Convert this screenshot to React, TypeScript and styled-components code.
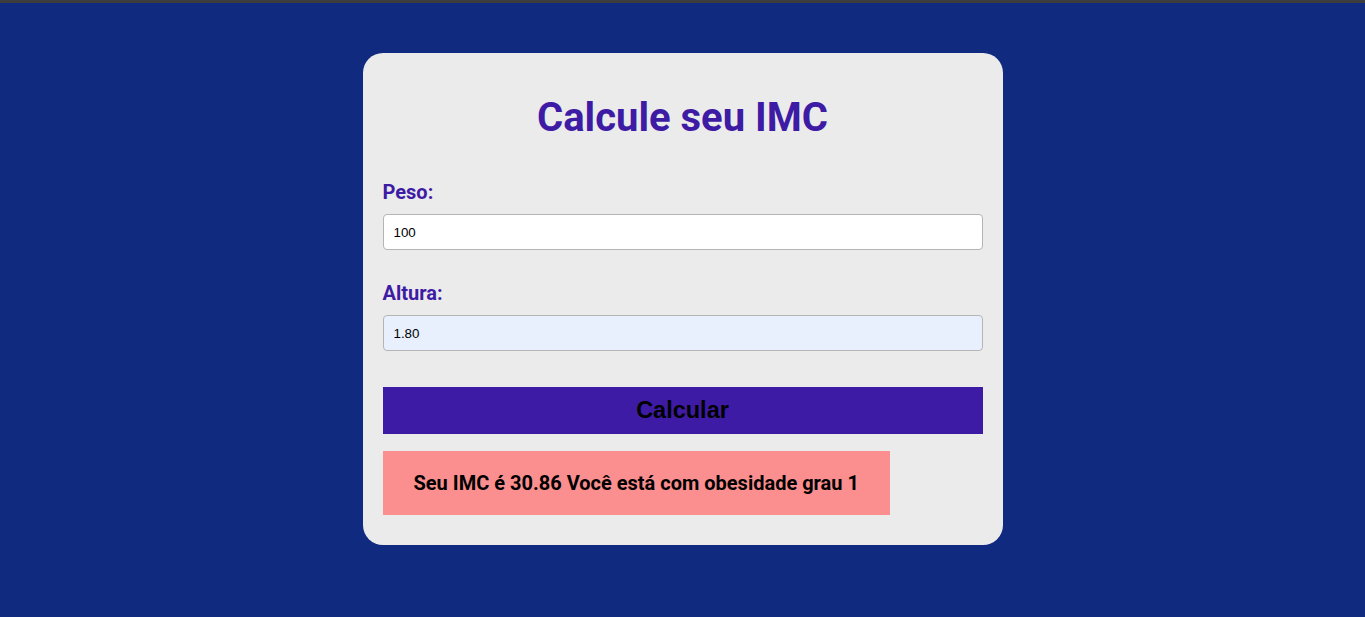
import React, { useState } from 'react';
import styled, { createGlobalStyle } from 'styled-components';

const GlobalStyle = createGlobalStyle`
  * {
    box-sizing: border-box;
  }

  html,
  body {
    margin: 0;
    padding: 0;
    min-height: 100%;
    background-color: #102a7f;
  }

  body {
    border-top: 3px solid #3d3d3d;
    font-family: Roboto, 'Liberation Sans', Arial, sans-serif;
  }
`;

const Page = styled.main`
  min-height: 614px;
  display: flex;
  justify-content: center;
  align-items: flex-start;
  padding-top: 50px;
`;

const Card = styled.div`
  width: 640px;
  background-color: #ebebeb;
  border-radius: 20px;
  padding: 20px 20px 30px;
  display: flex;
  flex-direction: column;
`;

const Title = styled.h1`
  margin: 21px 0 0;
  height: 47px;
  line-height: 47px;
  text-align: center;
  font-size: 40px;
  font-weight: 700;
  color: #3e1ba5;
`;

const Field = styled.div<{ $top: number }>`
  display: flex;
  flex-direction: column;
  gap: 10px;
  margin-top: ${(props) => props.$top}px;
`;

const Label = styled.label`
  font-size: 20px;
  line-height: 23px;
  font-weight: 700;
  color: #3e1ba5;
`;

const Input = styled.input<{ $filled?: boolean }>`
  width: 100%;
  height: 36px;
  padding: 0 10px;
  border: 1px solid #b5b5b5;
  border-radius: 4px;
  background-color: ${(props) => (props.$filled ? '#e8f0fe' : '#ffffff')};
  font-family: Arial, 'Liberation Sans', sans-serif;
  font-size: 13.33px;
  color: #000;
  outline: none;
`;

const Button = styled.button`
  margin-top: 36px;
  width: 100%;
  height: 47px;
  border: none;
  background-color: #3e1ba5;
  color: #000;
  font-family: Arial, 'Liberation Sans', sans-serif;
  font-size: 23.5px;
  font-weight: 700;
  cursor: pointer;
`;

const Result = styled.div`
  margin-top: 17px;
  align-self: flex-start;
  height: 64px;
  padding: 0 31px;
  display: flex;
  align-items: center;
  background-color: #fb8f8f;
  color: #000;
  font-size: 20px;
  font-weight: 700;
`;

export default function App() {
  const [peso, setPeso] = useState('100');
  const [altura, setAltura] = useState('1.80');

  return (
    <>
      <GlobalStyle />
      <Page>
        <Card>
          <Title>Calcule seu IMC</Title>
          <Field $top={40}>
            <Label htmlFor="peso">Peso:</Label>
            <Input id="peso" value={peso} onChange={(e) => setPeso(e.target.value)} />
          </Field>
          <Field $top={32}>
            <Label htmlFor="altura">Altura:</Label>
            <Input
              id="altura"
              $filled
              value={altura}
              onChange={(e) => setAltura(e.target.value)}
            />
          </Field>
          <Button>Calcular</Button>
          <Result>Seu IMC é 30.86 Você está com obesidade grau 1</Result>
        </Card>
      </Page>
    </>
  );
}
